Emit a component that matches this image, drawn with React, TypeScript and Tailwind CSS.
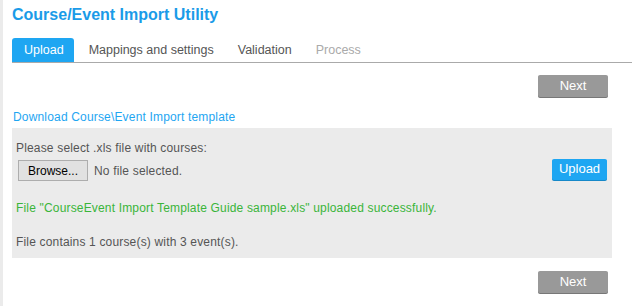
import React from 'react';

const tabs = ['Upload', 'Mappings and settings', 'Validation', 'Process'];

function NextButton() {
  return (
    <button type="button" className="mr-[4px] h-[22px] w-[70px] rounded-[2px] bg-[#999999] text-[13px] text-white shadow-[0_1px_0_#777]">
      Next
    </button>
  );
}

export default function App() {
  return (
    <div className="flex min-h-[306px] w-[632px] bg-white" style={{ fontFamily: '"Liberation Sans", Arial, sans-serif' }}>
      <div className="w-[3px] shrink-0 bg-[#ebebeb]" />
      <div className="flex-1 pl-[9px] pr-[20px]">
        <h1 className="pt-[5px] text-[16px] font-bold leading-[19px] text-[#1a9be8]">Course/Event Import Utility</h1>

        <div className="mt-[14px] mr-[-20px] flex border-b border-[#aaaaaa] text-[12.5px] text-[#555]">
          {tabs.map((t, i) => (
            <div
              key={t}
              className={
                i === 0
                  ? 'rounded-t-[3px] bg-[#1ea6f2] pl-[12px] pr-[10px] pb-[4px] pt-[4px] leading-[16px] text-white'
                  : 'px-[12px] pb-[4px] pt-[4px] leading-[16px] ' + (i === 3 ? 'text-[#aaaaaa]' : i === 1 ? 'ml-[3px]' : '')
              }
            >
              {t}
            </div>
          ))}
        </div>

        <div className="mt-[12px] flex justify-end">
          <NextButton />
        </div>

        <div className="mt-[13px] text-[12px] leading-[14px] tracking-[0.17px] text-[#1ea6f2]">
          <a href="#" className="pl-[1px]">Download Course\Event Import template</a>
        </div>

        <div className="mt-[4px] bg-[#ebebeb] pb-[9px] pl-[4px] pr-[5px] pt-[13px] text-[12px] leading-[14px] tracking-[0.17px] text-[#555]">
          <div>Please select .xls file with courses:</div>
          <div className="mt-[5px] flex items-center">
            <button type="button" className="ml-[2px] h-[21px] w-[70px] border border-[#adadad] bg-[#e1e1e1] text-[12px] tracking-normal text-black">Browse...</button>
            <span className="ml-[6px] text-[#555]">No file selected.</span>
            <div className="flex-1" />
            <button type="button" className="mt-[-3px] h-[21px] w-[55px] rounded-[2px] bg-[#1ea6f2] text-[13px] tracking-normal text-white shadow-[0_1px_0_#1688c8]">Upload</button>
          </div>
          <div className="mt-[20px] text-[#3ab53a]">File "CourseEvent Import Template Guide sample.xls" uploaded successfully.</div>
          <div className="mt-[20px]">File contains 1 course(s) with 3 event(s).</div>
        </div>

        <div className="mt-[13px] flex justify-end">
          <NextButton />
        </div>
      </div>
    </div>
  );
}
